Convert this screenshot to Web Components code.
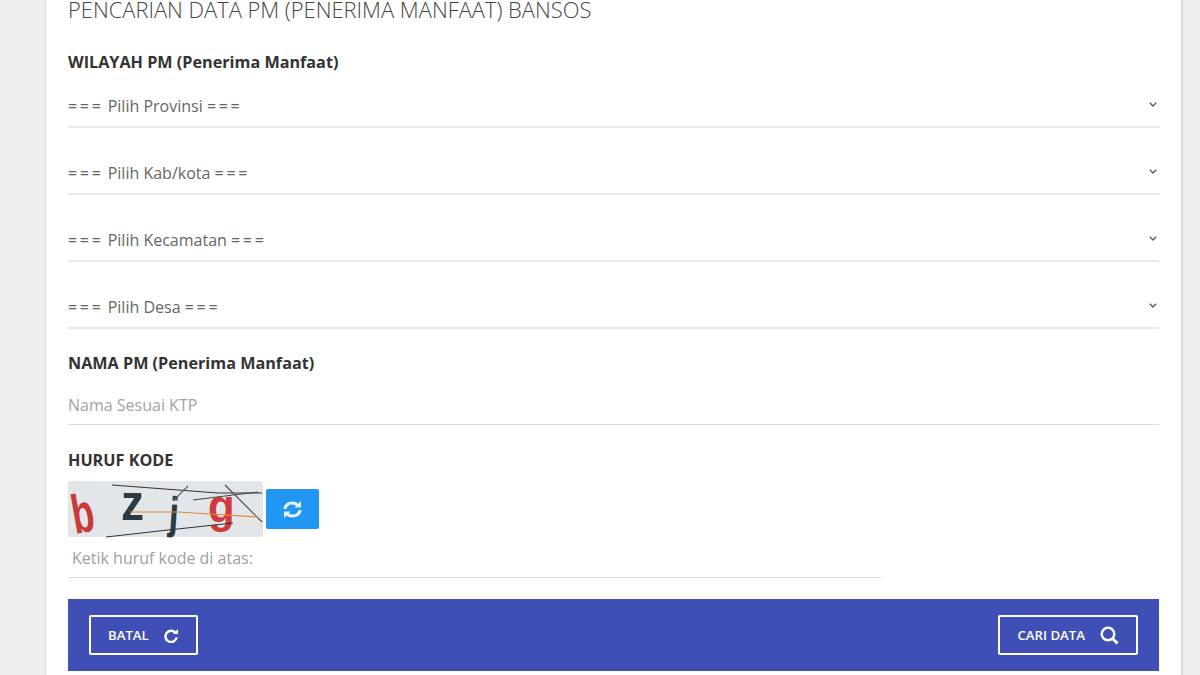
<!DOCTYPE html>
<html lang="id">
<head>
<meta charset="utf-8">
<title>Pencarian Data PM</title>
<style>
  html, body { margin: 0; height: 675px; overflow: hidden; }
  body { background: #efefef; font-family: "Open Sans", "Noto Sans", sans-serif; color: #333; }
</style>
</head>
<body>
<search-card>
  <card-title>PENCARIAN DATA PM (PENERIMA MANFAAT) BANSOS</card-title>
  <field-label>WILAYAH PM (Penerima Manfaat)</field-label>
  <select-row><span>===</span> Pilih Provinsi <span>===</span></select-row>
  <select-row><span>===</span> Pilih Kab/kota <span>===</span></select-row>
  <select-row><span>===</span> Pilih Kecamatan <span>===</span></select-row>
  <select-row><span>===</span> Pilih Desa <span>===</span></select-row>
  <field-label style="--label-top:24px">NAMA PM (Penerima Manfaat)</field-label>
  <text-row>Nama Sesuai KTP</text-row>
  <field-label style="--label-top:25px">HURUF KODE</field-label>
  <captcha-box></captcha-box>
  <action-bar>
    <outline-button slot="left" icon="redo">BATAL</outline-button>
    <outline-button slot="right" icon="search">CARI DATA</outline-button>
  </action-bar>
</search-card>

<script>
class SearchCard extends HTMLElement {
  constructor() {
    super();
    this.attachShadow({mode: 'open'}).innerHTML = `<style>
      :host {
        display: block;
        box-sizing: border-box;
        width: 1138px;
        height: 675px;
        margin-left: 45px;
        padding: 0 22px;
        background: #fff;
        border-left: 1px solid #d8d8d8;
        border-right: 2px solid #d8d8d8;
      }
    </style><slot></slot>`;
  }
}

class CardTitle extends HTMLElement {
  constructor() {
    super();
    this.attachShadow({mode: 'open'}).innerHTML = `<style>
      :host {
        display: block;
        height: 22px;
        font-size: 21.900px;
        line-height: 20px;
        font-weight: 300;
        color: #444;
      }
    </style><slot></slot>`;
  }
}

class FieldLabel extends HTMLElement {
  constructor() {
    super();
    this.attachShadow({mode: 'open'}).innerHTML = `<style>
      :host {
        display: block;
        margin-top: var(--label-top, 30px);
        font-size: 16.200px;
        line-height: 20px;
        font-weight: 700;
        color: #333;
      }
    </style><slot></slot>`;
  }
}

class SelectRow extends HTMLElement {
  constructor() {
    super();
    this.attachShadow({mode: 'open'}).innerHTML = `<style>
      :host {
        display: flex;
        align-items: center;
        box-sizing: border-box;
        height: 67px;
        padding-top: 25px;
        border-bottom: 2px solid #e8e8e8;
        font-size: 16px;
        color: #666;
      }
      :host(:first-of-type) { height: 56px; padding-top: 14px; }
      .text { flex: 1; white-space: pre; }
      ::slotted(span) { letter-spacing: 2.700px; }
      svg { width: 8px; height: 5px; margin-right: 2px; margin-top: -4px; }
    </style><div class="text"><slot></slot></div>
    <svg viewBox="0 0 8 5"><path d="M.8 .8L4 4l3.200-3.200" fill="none" stroke="#555" stroke-width="1.300"/></svg>`;
  }
}

class TextRow extends HTMLElement {
  constructor() {
    super();
    this.attachShadow({mode: 'open'}).innerHTML = `<style>
      :host {
        display: flex;
        align-items: center;
        box-sizing: border-box;
        height: 52px;
        padding-top: 13px;
        border-bottom: 1px solid #ddd;
        font-size: 16px;
        color: #a3a3a3;
      }
    </style><slot></slot>`;
  }
}

class CaptchaBox extends HTMLElement {
  constructor() {
    super();
    this.attachShadow({mode: 'open'}).innerHTML = `<style>
      :host { display: block; margin-top: 11px; }
      .top { display: flex; align-items: center; gap: 3px; }
      .pic { display: block; width: 195px; height: 56px; background: #e3e6e8; border-radius: 2px; overflow: visible; }
      .pic text { font-family: "Liberation Sans", sans-serif; font-weight: 700; }
      button {
        display: flex; align-items: center; justify-content: center;
        width: 53px; height: 40px; padding: 0;
        border: 0; border-radius: 2px; background: #2196f3;
      }
      .hint {
        box-sizing: border-box;
        width: 813px;
        height: 40px;
        margin-top: 1px;
        padding: 0 4px;
        display: flex; align-items: center;
        border-bottom: 1px solid #ddd;
        font-size: 16px;
        color: #a0a0a0;
      }
    </style>
    <div class="top">
      <svg class="pic" viewBox="0 0 195 56">
        <text font-size="38" fill="#c93a3a" transform="translate(7 53) rotate(-10) scale(.95 1.450)">b</text>
        <text font-size="46" fill="#2c3a45" transform="translate(53 39) scale(1 1.100)">z</text>
        <text font-size="36" fill="#2c3a45" transform="translate(100 47) rotate(4) scale(1 1.250)">j</text>
        <text font-size="38" fill="#cf3a3a" transform="translate(140 41) scale(1.150 1.200)">g</text>
        <g fill="none" stroke-width="1.200">
          <path d="M44 4L110 9 150 12 194 12" stroke="#30343a"/>
          <path d="M125 19L165 14 190 11" stroke="#40444a"/>
          <path d="M38 56L100 49 165 42" stroke="#30343a"/>
          <path d="M105 20L120 5" stroke="#60646a"/>
          <path d="M157 4L194 41" stroke="#50545a"/>
          <path d="M62 31H110L190 36" stroke="#e08a3a"/>
        </g>
      </svg>
      <button aria-label="muat ulang">
        <svg width="19" height="17" viewBox="0 0 19 17" fill="none" stroke="#e6f2ff" stroke-width="3">
          <path d="M2 8C2 4 6 2 9 2c3 0 5 1 6 3"/><path d="M11.500 6.500H18V0z" fill="#e6f2ff" stroke="none"/>
          <path d="M17 9c0 4-4 6-7.500 6-3 0-5-1-6-3"/><path d="M7.500 10.500H1V17z" fill="#e6f2ff" stroke="none"/>
        </svg>
      </button>
    </div>
    <div class="hint">Ketik huruf kode di atas:</div>`;
  }
}

class ActionBar extends HTMLElement {
  constructor() {
    super();
    this.attachShadow({mode: 'open'}).innerHTML = `<style>
      :host {
        display: flex;
        justify-content: space-between;
        align-items: center;
        box-sizing: border-box;
        height: 72px;
        margin-top: 21px;
        padding: 0 21px;
        background: #3f4fb5;
      }
    </style><slot name="left"></slot><slot name="right"></slot>`;
  }
}

const ICONS = {
  redo: `<svg width="15" height="15" viewBox="0 0 16 16" fill="none">
    <path d="M12.500 5.500A6 6 0 1 0 13.500 10" stroke="#fff" stroke-width="2.600"/>
    <path d="M9.500 6.500H15V1z" fill="#fff"/></svg>`,
  search: `<svg width="19" height="19" viewBox="0 0 19 19" fill="none" stroke="#fff">
    <circle cx="8" cy="8" r="6.300" stroke-width="2.400"/>
    <path d="M12.500 12.500L17.500 17.500" stroke-width="3"/></svg>`
};

class OutlineButton extends HTMLElement {
  constructor() {
    super();
    const icon = ICONS[this.getAttribute('icon')] || '';
    this.attachShadow({mode: 'open'}).innerHTML = `<style>
      :host {
        display: inline-flex;
        align-items: center;
        gap: 15px;
        box-sizing: border-box;
        height: 40px;
        padding: 0 17px;
        border: 2px solid #fff;
        border-radius: 2px;
        color: #fff;
        font-size: 13.200px;
        font-weight: 600;
      }
      svg { display: block; }
    </style><slot></slot>${icon}`;
  }
}

customElements.define('search-card', SearchCard);
customElements.define('card-title', CardTitle);
customElements.define('field-label', FieldLabel);
customElements.define('select-row', SelectRow);
customElements.define('text-row', TextRow);
customElements.define('captcha-box', CaptchaBox);
customElements.define('action-bar', ActionBar);
customElements.define('outline-button', OutlineButton);
</script>
</body>
</html>
